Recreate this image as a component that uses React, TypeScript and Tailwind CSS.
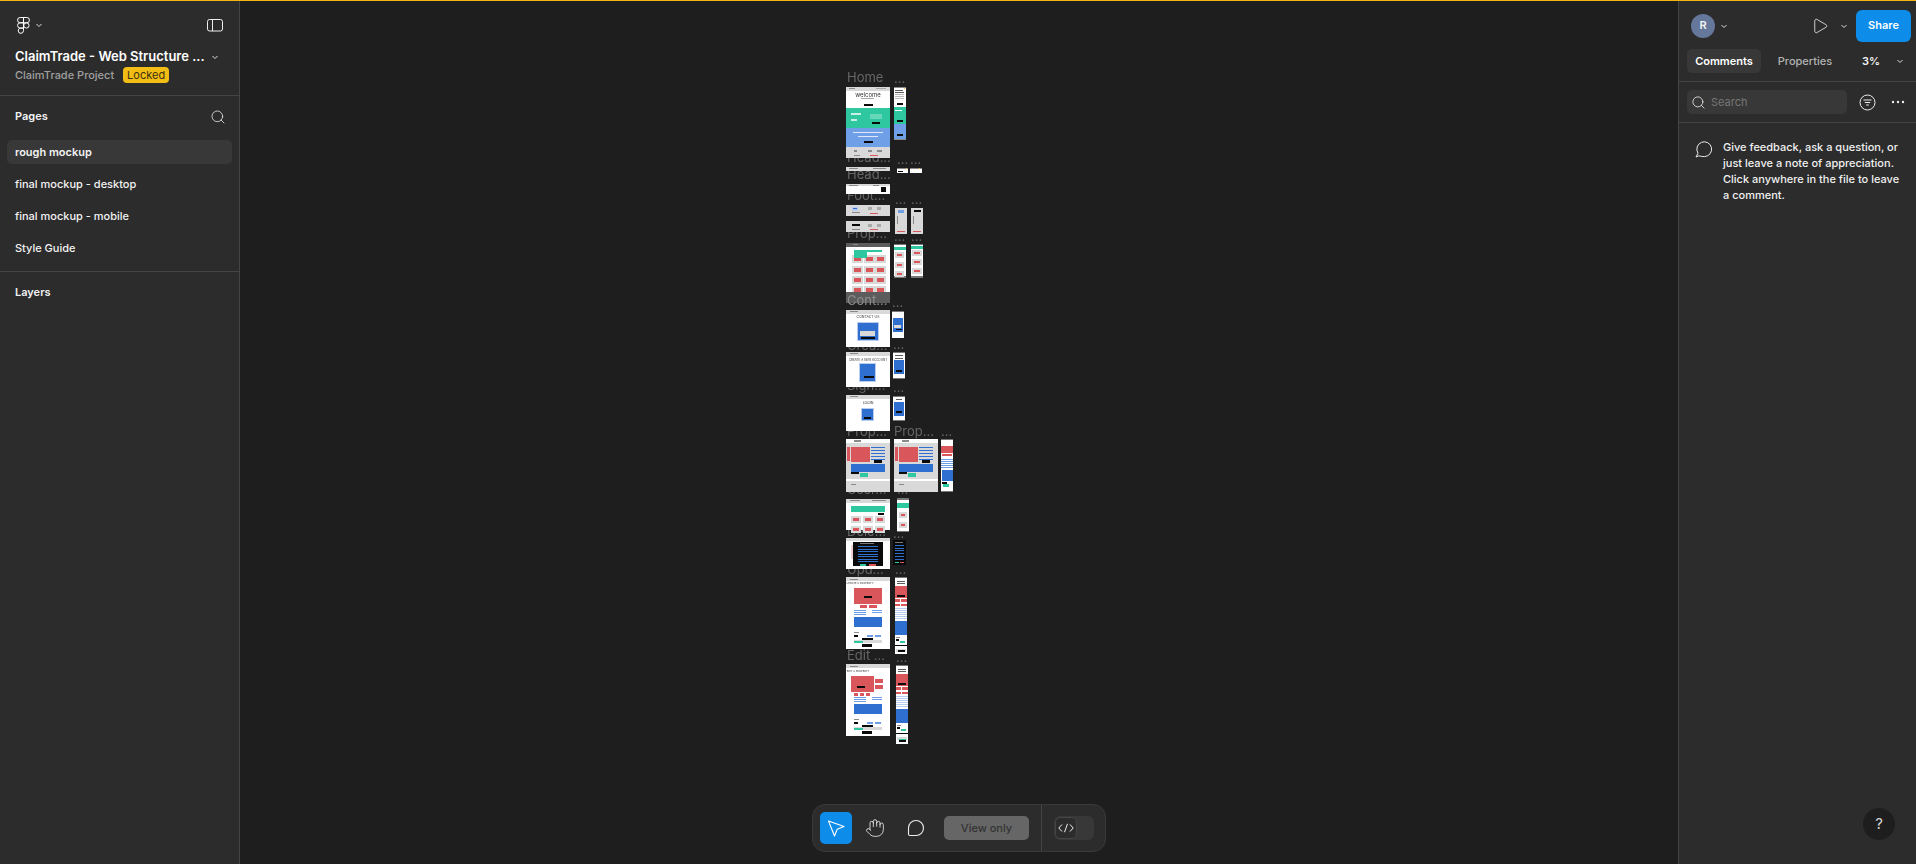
import React from "react";
import { Search, Play, Hand } from "lucide-react";

type R = [number, number, number, number, string];
const G = "#d9d9d9", W = "#ffffff", K = "#0a0a0a", T = "#2fc79f", B = "#2f6fd0", L = "#6f9fe6", D = "#d9575a", S = "#5c5c5c", X = "#8a8a8a", P = "#b9cdf0";

const frame = (x: number, y: number, w: number, h: number, bg = W, top = G): R[] => [
  [x, y, w, h, bg],
  [x, y, w, Math.min(4, h), top],
  [x + 3, y + 1, 6, 1, X],
  [x + w - 14, y + 1, 10, 1, "#a8a8a8"],
];

const cards = (xs: number[], ys: number[], w: number, h: number): R[] =>
  ys.flatMap((y) =>
    xs.flatMap((x): R[] => [
      [x, y, w, h, G],
      [x + 2, y + 2, w - 4, h - 4, D],
    ])
  );

const lines = (x: number, y: number, w: number, n: number, gap: number, c: string): R[] =>
  Array.from({ length: n }, (_, i): R => [x, y + i * gap, w, 1, c]);

const detailDesktop = (x: number): R[] => [
  [x, 439, 44, 53, G],
  [x, 439, 44, 4, W],
  [x + 8, 440, 7, 2, X],
  [x + 1, 447, 3, 14, D],
  [x + 5, 447, 19, 15, D],
  ...lines(x + 25, 447, 14, 5, 3, B),
  [x + 28, 460, 8, 3, K],
  [x + 5, 464, 34, 8, B],
  [x + 5, 472, 8, 2, K],
  [x + 14, 473, 8, 4, T],
  [x, 479, 44, 2, W],
  [x + 5, 484, 5, 1, X],
];

const update = (y: number, alt: boolean): R[] => [
  [846, y, 44, 72, W],
  [846, y, 44, 4, G],
  [850, y + 2, 8, 1, X],
  ...(alt
    ? ([
        [851, y + 12, 23, 16, D],
        [875, y + 15, 8, 4, D],
        [875, y + 21, 8, 4, D],
        [854, y + 29, 4, 3, D],
        [860, y + 29, 4, 3, D],
        [866, y + 29, 4, 3, D],
        [857, y + 22, 8, 2, K],
      ] as R[])
    : ([
        [854, y + 11, 28, 16, D],
        [864, y + 19, 8, 2, K],
        [860, y + 28, 7, 3, D],
        [869, y + 28, 8, 3, D],
      ] as R[])),
  ...lines(854, y + 33, 12, 3, 2, L),
  ...lines(872, y + 33, 10, 2, 2, L),
  [854, y + 40, 28, 10, B],
  [854, y + 55, 5, 1, X],
  [854, y + 58, 4, 2, K],
  [867, y + 58, 6, 2, L],
  [875, y + 58, 6, 2, L],
  [862, y + 61, 11, 2, K],
  [854, y + 63, 28, 3, G],
  [854, y + 64, 9, 2, T],
  [862, y + 67, 10, 3, K],
];

const updateMobile = (y: number, h: number, x: number): R[] => [
  [x, y, 12, h, W],
  [x, y, 12, 1, "#777"],
  [x + 2, y + 4, 8, 1, S],
  [x + 2, y + 6, 8, 1, S],
  [x, y + 9, 12, 12, D],
  [x + 2, y + 18, 8, 2, K],
  [x, y + 22, 5, 3, D],
  [x + 6, y + 22, 6, 3, D],
  [x, y + 27, 5, 2, D],
  [x + 6, y + 27, 6, 2, D],
  ...lines(x, y + 31, 12, 6, 2, P),
  [x, y + 44, 12, 14, B],
  [x + 1, y + 60, 4, 1, X],
  [x + 1, y + 62, 3, 2, K],
  [x + 5, y + 64, 5, 2, T],
  [x, y + 68, 12, 1, K],
  [x + 1, y + 72, 10, 3, G],
  [x + 3, y + 74, 7, 1, T],
  [x + 3, h + y - 4, 7, 2, K],
];

const rects: R[] = [
  // Home
  ...frame(846, 87, 44, 71, W),
  [846, 108, 44, 20, T],
  [846, 128, 44, 19, L],
  [846, 147, 44, 11, G],
  [861, 98, 13, 1, "#aaa"],
  [864, 104, 9, 2, K],
  [851, 113, 10, 2, "#c8f0e4"],
  [851, 119, 6, 2, "#c8f0e4"],
  [870, 114, 12, 5, "#66d8b9"],
  [872, 122, 8, 2, K],
  [853, 132, 30, 1, "#dde8fa"],
  [858, 136, 20, 1, "#dde8fa"],
  [864, 141, 9, 2, K],
  [854, 150, 3, 2, X],
  [868, 150, 4, 2, X],
  [877, 150, 5, 2, X],
  [870, 155, 8, 1, D],
  [854, 155, 6, 1, X],
  [894, 87, 12, 53, "#8a8a8a"],
  [894, 88, 12, 19, W],
  [895, 90, 8, 1, S],
  [895, 92, 9, 1, S],
  [895, 94, 9, 1, "#bbb"],
  [895, 96, 9, 1, "#bbb"],
  [895, 98, 9, 1, "#bbb"],
  [897, 103, 6, 2, K],
  [904, 88, 1, 1, "#e8b93a"],
  [894, 107, 12, 17, T],
  [895, 110, 7, 1, W],
  [897, 120, 6, 2, K],
  [894, 124, 12, 15, L],
  [897, 134, 6, 2, K],
  // Head
  [846, 167, 44, 4, G],
  [849, 168, 9, 1, X],
  [873, 168, 13, 1, X],
  [897, 168, 11, 5, W],
  [897, 168, 11, 1, "#888"],
  [906, 168, 1, 1, "#e8b93a"],
  [898, 171, 5, 1, K],
  [910, 168, 12, 5, W],
  [910, 168, 12, 1, "#888"],
  [919, 168, 1, 1, "#e8b93a"],
  [846, 184, 44, 10, W],
  [846, 184, 44, 2, G],
  [849, 185, 9, 1, X],
  [881, 187, 5, 5, K],
  [873, 185, 6, 1, X],
  // Foot
  [846, 205, 44, 11, G],
  [852, 207, 6, 4, P],
  [853, 208, 4, 1, B],
  [852, 212, 8, 1, "#888"],
  [870, 213, 8, 1, D],
  [868, 207, 4, 3, "#aaa"],
  [877, 207, 4, 3, "#aaa"],
  [846, 221, 44, 11, G],
  [852, 224, 8, 2, K],
  [868, 224, 4, 3, "#aaa"],
  [877, 224, 4, 3, "#aaa"],
  [870, 229, 8, 1, D],
  [852, 229, 8, 1, "#888"],
  [895, 208, 12, 26, G],
  [898, 210, 6, 3, L],
  [897, 216, 1, 8, X],
  [897, 231, 8, 1, D],
  [911, 208, 12, 26, G],
  [914, 210, 7, 2, K],
  [913, 216, 1, 8, X],
  [913, 231, 8, 1, D],
  // Properties
  [846, 243, 44, 60, W],
  [846, 243, 44, 4, S],
  [853, 244, 5, 1, "#888"],
  ...cards([852, 864, 875], [255, 266, 276, 286], 11, 8),
  [854, 250, 28, 2, T],
  [854, 252, 13, 6, T],
  [846, 292, 44, 11, S],
  [894, 244, 12, 34, "#777"],
  [894, 245, 12, 31, W],
  [894, 247, 12, 3, T],
  ...cards([895], [252, 262, 271], 9, 6),
  [911, 244, 12, 34, "#777"],
  [911, 245, 12, 31, W],
  [911, 246, 12, 3, T],
  ...cards([912], [250, 259, 268], 10, 6),
  // Contact
  [846, 310, 44, 37, W],
  [846, 310, 44, 4, G],
  [850, 311, 8, 1, X],
  [857, 322, 22, 19, P],
  [858, 323, 20, 17, B],
  [860, 331, 15, 5, G],
  [861, 337, 14, 2, K],
  [892, 311, 12, 27, "#777"],
  [892, 312, 12, 26, W],
  [893, 318, 10, 14, B],
  [894, 325, 7, 3, G],
  [896, 329, 6, 1, K],
  // Create account
  [846, 352, 44, 35, W],
  [846, 352, 44, 4, G],
  [850, 353, 8, 1, X],
  [859, 363, 17, 19, P],
  [860, 364, 15, 17, B],
  [864, 376, 10, 2, K],
  [893, 352, 12, 27, "#777"],
  [893, 353, 12, 25, W],
  [895, 355, 8, 1, S],
  [895, 358, 8, 1, S],
  [894, 360, 10, 14, B],
  [896, 370, 6, 2, K],
  // Login
  [846, 395, 44, 36, W],
  [846, 395, 44, 4, G],
  [850, 396, 8, 1, X],
  [861, 408, 13, 13, P],
  [862, 409, 11, 11, B],
  [864, 417, 7, 2, K],
  [893, 396, 12, 25, "#777"],
  [893, 397, 12, 23, W],
  [896, 399, 6, 1, S],
  [894, 402, 10, 14, B],
  [896, 411, 6, 2, K],
  // Property detail
  ...detailDesktop(846),
  ...detailDesktop(894),
  [941, 439, 12, 53, "#777"],
  [941, 440, 12, 51, W],
  [941, 446, 12, 7, D],
  [942, 454, 10, 2, D],
  ...lines(941, 459, 12, 5, 2, L),
  [942, 470, 11, 11, B],
  [942, 482, 5, 2, K],
  [943, 484, 6, 3, T],
  // User
  [846, 499, 44, 31, W],
  [846, 499, 44, 4, G],
  [850, 500, 10, 1, X],
  [872, 500, 14, 1, X],
  [851, 506, 34, 6, T],
  [878, 513, 6, 2, K],
  ...cards([851, 863, 875], [516, 526], 10, 7),
  [897, 498, 12, 34, "#777"],
  [897, 500, 12, 31, W],
  [897, 503, 12, 5, T],
  ...cards([899], [512, 522], 8, 6),
  // Popup
  [846, 538, 44, 31, W],
  [846, 538, 44, 3, G],
  [851, 545, 3, 14, "#f0d0d0"],
  [853, 542, 30, 24, K],
  [860, 543, 14, 1, "#777"],
  ...lines(858, 546, 20, 7, 2.5, B),
  [860, 564, 6, 2, T],
  [869, 564, 7, 2, D],
  [893, 540, 13, 25, K],
  [895, 542, 8, 1, "#777"],
  ...lines(895, 545, 9, 6, 2.7, B),
  [895, 562, 4, 1, T],
  [900, 562, 4, 1, D],
  // Update + Edit
  ...update(577, false),
  ...updateMobile(577, 77, 895),
  ...update(664, true),
  ...updateMobile(665, 79, 896),
];

const labels: [string, number, number][] = [
  ["Home", 847, 77],
  ["...", 894, 78],
  ["Head...", 847, 157],
  ["...", 897, 159],
  ["...", 910, 159],
  ["Head...", 847, 174],
  ["Foot...", 847, 195],
  ["...", 895, 199],
  ["...", 911, 199],
  ["Foot...", 847, 211],
  ["Prop...", 847, 233],
  ["...", 894, 236],
  ["...", 911, 236],
  ["...", 892, 302],
  ["Crea...", 847, 345],
  ["...", 893, 344],
  ["Sign...", 847, 385],
  ["...", 893, 387],
  ["Prop...", 847, 431],
  ["Prop...", 894, 431],
  ["...", 941, 431],
  ["User...", 847, 489],
  ["...", 897, 489],
  ["Dele...", 847, 531],
  ["...", 893, 533],
  ["Upd...", 847, 569],
  ["...", 895, 569],
  ["Edit ...", 847, 655],
  ["...", 896, 657],
];

// Tiny headings inside the thumbnails, painted over the frames.
const tiny: [string, number, number, number][] = [
  ["welcome", 868, 95, 6],
  ["CONTACT US", 868, 318, 3.5],
  ["CREATE A NEW ACCOUNT", 868, 360, 3],
  ["LOGIN", 868, 404, 3.5],
  ["UPDATE A PROPERTY", 860, 583, 2.6],
  ["EDIT A PROPERTY", 858, 671, 2.6],
];

function FigmaLogo() {
  return (
    <svg width="13" height="17" viewBox="0 0 13 17" fill="none" stroke="#fff" strokeWidth="1">
      <path d="M6.5 .5H3.2a2.65 2.65 0 0 0 0 5.3h3.3z" />
      <path d="M6.5 .5h3.3a2.65 2.65 0 0 1 0 5.3H6.5z" />
      <path d="M6.5 5.8H3.2a2.65 2.65 0 0 0 0 5.3h3.3z" />
      <circle cx="9.4" cy="8.45" r="2.65" />
      <path d="M6.5 11.1H3.2a2.65 2.65 0 1 0 3.3 2.6z" />
    </svg>
  );
}

function Chevron({ className = "" }: { className?: string }) {
  return (
    <svg width="8" height="8" viewBox="0 0 8 8" fill="none" stroke="#ddd" strokeWidth="1" className={className}>
      <path d="M1.5 3 4 5.5 6.5 3" />
    </svg>
  );
}

function PageRow({ label, active }: { label: string; active?: boolean }) {
  return (
    <div className={`h-6 mx-[7px] pl-[8px] flex items-center rounded-[5px] text-[11px] text-[#f2f2f2] ${active ? "bg-[#383838] font-semibold" : "font-medium"}`}>
      {label}
    </div>
  );
}

function LeftPanel() {
  return (
    <aside className="w-[240px] shrink-0 bg-[#2c2c2c] border-r border-[#444444] flex flex-col">
      <div className="h-[95px] border-b border-[#444444] flex flex-col px-[15px]">
        <div className="flex items-center justify-between h-[32px] mt-[8px] pr-[1px]">
          <div className="flex items-center gap-[5px] pl-[2px]">
            <FigmaLogo />
            <Chevron />
          </div>
          <svg width="16" height="13" viewBox="0 0 16 13" fill="none" stroke="#eee" strokeWidth="1">
            <rect x=".5" y=".5" width="15" height="11.5" rx="2" />
            <path d="M5.5 .5v11.5" />
          </svg>
        </div>
        <div className="flex items-center justify-between h-[18px] mt-[7px] pr-[5px]">
          <span className="text-[13px] font-semibold text-white whitespace-nowrap">ClaimTrade - Web Structure ...</span>
          <Chevron />
        </div>
        <div className="flex items-center gap-[9px] mt-[1px]">
          <span className="text-[11px] font-medium text-[#a0a0a0]">ClaimTrade Project</span>
          <span className="h-[16px] w-[46px] rounded-[4px] bg-[#f2bd14] text-[#3a3010] text-[11px] flex items-center justify-center">Locked</span>
        </div>
      </div>
      <div className="h-[176px] border-b border-[#444444]">
        <div className="h-[44px] px-[15px] pb-[3px] flex items-center justify-between">
          <span className="text-[11px] font-semibold text-[#f2f2f2]">Pages</span>
          <Search size={16} strokeWidth={1.2} color="#eee" className="mr-[-2px]" />
        </div>
        <div className="flex flex-col gap-2">
          <PageRow label="rough mockup" active />
          <PageRow label="final mockup - desktop" />
          <PageRow label="final mockup - mobile" />
          <PageRow label="Style Guide" />
        </div>
      </div>
      <div className="px-[15px] h-[41px] flex items-center text-[11px] font-semibold text-[#f2f2f2]">Layers</div>
    </aside>
  );
}

function RightPanel() {
  return (
    <aside className="relative w-[238px] shrink-0 bg-[#2c2c2c] border-l border-[#444444] flex flex-col">
      <div className="flex items-center h-[48px] pl-[12px] pr-[5px] pt-[1px]">
        <div className="w-6 h-6 rounded-full bg-[#66779c] text-[#f2f2f2] text-[11px] font-semibold flex items-center justify-center">R</div>
        <Chevron className="ml-[5px]" />
        <Play size={18} strokeWidth={1.1} color="#eee" className="ml-[83px]" />
        <Chevron className="ml-[11px]" />
        <div className="ml-[8px] w-[55px] h-[32px] rounded-[6px] bg-[#0d8ce9] text-white text-[11px] font-semibold flex items-center justify-center">Share</div>
      </div>
      <div className="h-[33px] flex items-start border-b border-[#444444] pl-[8px]">
        <div className="w-[74px] h-6 rounded-[5px] bg-[#383838] text-white text-[11px] font-semibold flex items-center justify-center">Comments</div>
        <div className="ml-[16px] w-[56px] h-6 text-[#b3b3b3] text-[11px] font-medium flex items-center justify-center">Properties</div>
        <div className="ml-[29px] h-6 text-[#f2f2f2] text-[11px] font-semibold flex items-center">3%</div>
        <Chevron className="ml-[16px] mt-2" />
      </div>
      <div className="h-[41px] flex items-center border-b border-[#444444] pl-[8px]">
        <div className="w-[160px] h-6 rounded-[5px] bg-[#383838] flex items-center pl-[4px] gap-[5px]">
          <Search size={15} strokeWidth={1.3} color="#eee" />
          <span className="text-[11px] text-[#777777]">Search</span>
        </div>
        <svg width="17" height="17" viewBox="0 0 17 17" fill="none" stroke="#eee" strokeWidth="1" className="ml-[12px]">
          <circle cx="8.5" cy="8.5" r="7.5" />
          <path d="M4.5 6h8M5.8 8.5h5.4M7.2 11h2.6" />
        </svg>
        <svg width="14" height="4" viewBox="0 0 14 4" fill="#eee" className="ml-[15px]">
          <circle cx="2" cy="2" r="1.2" />
          <circle cx="7" cy="2" r="1.2" />
          <circle cx="12" cy="2" r="1.2" />
        </svg>
      </div>
      <div className="flex items-start pl-[16px] pt-[16px]">
        <svg width="18" height="17" viewBox="0 0 18 17" fill="none" stroke="#eee" strokeWidth="1" className="mt-[2px]">
          <path d="M1 16 3 12.2A7.4 7.4 0 1 1 9.6 15.6C7.6 15.6 5 15.1 3.8 14.8L1 16Z" strokeLinejoin="round" />
        </svg>
        <p className="ml-[10px] w-[180px] text-[11px] leading-4 font-medium text-[#f0f0f0]">
          Give feedback, ask a question, or just leave a note of appreciation. Click anywhere in the file to leave a comment.
        </p>
      </div>
      <div className="absolute left-[184px] top-[807px] w-8 h-8 rounded-full bg-[#1e1e1e] flex items-center justify-center text-[15px] text-[#d5d5d5]">?</div>
    </aside>
  );
}

function Toolbar() {
  return (
    <div className="absolute left-[572px] top-[803px] w-[294px] h-[48px] rounded-[13px] bg-[#2c2c2c] border border-[#3a3a3a] flex items-center">
      <div className="ml-[7px] w-8 h-8 rounded-[5px] bg-[#0d8ce9] flex items-center justify-center">
        <svg width="20" height="20" viewBox="0 0 20 20" fill="none" stroke="#fff" strokeWidth="1.1" strokeLinejoin="round">
          <path d="M2.5 3 18 8.5l-6.8 2.7-2.7 6.8z" />
        </svg>
      </div>
      <Hand size={20} strokeWidth={1} color="#eee" className="ml-[13px]" />
      <svg width="18" height="18" viewBox="0 0 18 18" fill="none" stroke="#eee" strokeWidth="1.1" className="ml-[22px]">
        <path d="M1.5 15V9a7.5 7.5 0 1 1 7.5 7.5H3A1.5 1.5 0 0 1 1.5 15z" />
      </svg>
      <div className="ml-[19px] w-[85px] h-6 rounded-[5px] bg-[#666666] text-[#333333] text-[11px] font-medium flex items-center justify-center">View only</div>
      <div className="ml-[12px] w-px h-full bg-[#444444]" />
      <div className="ml-[12px] w-[40px] h-6 rounded-[6px] bg-[#383838] p-px">
        <div className="w-[22px] h-[22px] rounded-[5px] bg-[#2c2c2c] border border-[#444444] flex items-center justify-center">
          <svg width="16" height="10" viewBox="0 0 16 10" fill="none" stroke="#eee" strokeWidth="1">
            <path d="M4 1.5 .8 5 4 8.5M12 1.5 15.2 5 12 8.5M9.5 .8 6.5 9.2" />
          </svg>
        </div>
      </div>
    </div>
  );
}

function Canvas() {
  return (
    <main className="relative flex-1 bg-[#1e1e1e] overflow-hidden">
      <div className="absolute left-[-240px] top-[-1px] blur-[0.5px]">
        {labels.map(([t, x, y], i) => (
          <span
            key={i}
            className="absolute text-[13px] leading-none text-[#666666] whitespace-nowrap -translate-y-1/2"
            style={{ left: x, top: y }}
          >
            {t}
          </span>
        ))}
        {rects.map(([x, y, w, h, c], i) => (
          <div key={i} className="absolute" style={{ left: x, top: y, width: w, height: h, background: c }} />
        ))}
        <span className="absolute left-[847px] top-[293px] text-[13px] leading-[14px] text-[#8c8c8c] whitespace-nowrap">Cont...</span>
        {tiny.map(([t, x, y, s], i) => (
          <span
            key={i}
            className="absolute leading-none text-[#333333] whitespace-nowrap -translate-x-1/2 -translate-y-1/2"
            style={{ left: x, top: y, fontSize: s }}
          >
            {t}
          </span>
        ))}
      </div>
      <Toolbar />
    </main>
  );
}

export default function App() {
  return (
    <div className="h-[864px] w-[1916px] overflow-hidden flex flex-col bg-[#1e1e1e] font-['Inter',sans-serif]">
      <div className="h-px shrink-0 bg-[#f5b50f]" />
      <div className="flex-1 flex min-h-0">
        <LeftPanel />
        <Canvas />
        <RightPanel />
      </div>
    </div>
  );
}
